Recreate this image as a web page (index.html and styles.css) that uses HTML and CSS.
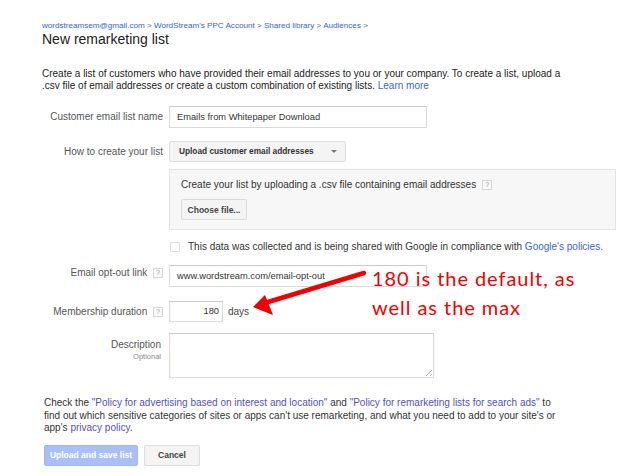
FILE: index.html
```html
<!DOCTYPE html>
<html lang="en">
<head>
<meta charset="utf-8">
<title>New remarketing list</title>
<link rel="stylesheet" href="styles.css">
</head>
<body>
<div class="page">
  <div class="crumbs"><a>wordstreamsem@gmail.com</a> &gt; <a>WordStream's PPC Account</a> &gt; <a>Shared library</a> &gt; <a>Audiences</a> &gt;</div>
  <h1 class="title">New remarketing list</h1>
  <p class="intro">Create a list of customers who have provided their email addresses to you or your company. To create a list, upload a<br>.csv file of email addresses or create a custom combination of existing lists. <a>Learn more</a></p>

  <div class="form">
    <div class="row r-name">
      <div class="label">Customer email list name</div>
      <div class="field"><div class="input w-name">Emails from Whitepaper Download</div></div>
    </div>
    <div class="row r-how">
      <div class="label">How to create your list</div>
      <div class="field"><div class="select">Upload customer email addresses<span class="caret"></span></div></div>
    </div>
    <div class="row r-panel">
      <div class="label"></div>
      <div class="field">
        <div class="panel">
          <div class="panel-text">Create your list by uploading a .csv file containing email addresses <span class="help">?</span></div>
          <div class="btn">Choose file...</div>
        </div>
      </div>
    </div>
    <div class="row r-check">
      <div class="label"></div>
      <div class="field check"><span class="box"></span><span class="check-text">This data was collected and is being shared with Google in compliance with <a>Google's policies.</a></span></div>
    </div>
    <div class="row r-opt">
      <div class="label lift">Email opt-out link <span class="help">?</span></div>
      <div class="field"><div class="input w-name">www.wordstream.com/email-opt-out</div></div>
    </div>
    <div class="row r-dur">
      <div class="label">Membership duration <span class="help">?</span></div>
      <div class="field"><div class="input w-num">180</div><span class="unit">days</span></div>
    </div>
    <div class="row r-desc">
      <div class="label top">Description<span class="sub">Optional</span></div>
      <div class="field"><div class="textarea"><span class="grip"></span></div></div>
    </div>
  </div>

  <p class="policy">Check the <a class="v">"Policy for advertising based on interest and location"</a> and <a class="v">"Policy for remarketing lists for search ads"</a> to<br>find out which sensitive categories of sites or apps can't use remarketing, and what you need to add to your site's or<br>app's <a class="v">privacy policy</a>.</p>

  <div class="actions">
    <div class="btn primary">Upload and save list</div>
    <div class="btn cancel">Cancel</div>
  </div>
</div>

<div class="note">180 is the default, as<br>well as the max</div>
<svg class="arrow" width="623" height="476" viewBox="0 0 623 476">
  <line x1="364" y1="273" x2="268" y2="302" stroke="#f00000" stroke-width="4.5" stroke-linecap="round"/>
  <polygon points="253,307 265,295 273,315" fill="#f00000"/>
</svg>
</body>
</html>
```

FILE: styles.css
```css
html, body { margin: 0; padding: 0; background: #fff; }
body {
  font-family: "Liberation Sans", Arial, sans-serif;
  color: #333;
  position: relative;
  width: 623px;
  height: 476px;
  overflow: hidden;
}
a { color: #3b63cc; text-decoration: none; }
a.v { color: #5250c0; }

.page { padding: 21px 0 0 42px; }

.crumbs { font-size: 8.1px; line-height: 10px; color: #666; }
.crumbs a { color: #3b63cc; }

.title {
  margin: 0;
  font-size: 14px;
  line-height: 16px;
  font-weight: normal;
  color: #222;
}

.intro {
  margin: 21px 0 0;
  font-size: 10px;
  line-height: 12px;
  color: #222;
}

.form { margin-top: 14px; display: flex; flex-direction: column; }
.row { display: flex; align-items: center; gap: 6px; }
.label {
  width: 121px;
  flex: none;
  text-align: right;
  font-size: 10px;
  line-height: 12px;
  color: #555;
  white-space: nowrap;
}
.label.lift { align-self: flex-start; padding-top: 2px; }
.label.top { align-self: flex-start; padding-top: 6px; width: 119px; padding-right: 2px; }
.sub { display: block; font-size: 7.5px; line-height: 10px; color: #888; margin-top: 1px; }
.field { display: flex; align-items: center; font-size: 10px; }

.r-how { margin-top: 13px; }
.r-panel { margin-top: 7px; }
.r-check { margin-top: 11px; }
.r-opt { margin-top: 12px; }
.r-dur { margin-top: 14px; }
.r-desc { margin-top: 11px; }

.input {
  box-sizing: border-box;
  height: 22px;
  border: 1px solid #d9d9d9;
  border-top-color: #c9c9c9;
  padding: 0 7px;
  font-size: 9.3px;
  line-height: 20px;
  color: #333;
  background: #fff;
}
.w-name { width: 258px; }
.w-num { width: 54px; height: 21px; line-height: 19px; text-align: right; padding: 0 3px; }
.unit { margin-left: 5px; font-size: 10px; color: #444; }

.select {
  box-sizing: border-box;
  width: 177px;
  height: 21px;
  border: 1px solid #dcdcdc;
  border-radius: 2px;
  background: #f4f4f4;
  padding: 0 0 0 9px;
  font-size: 8.3px;
  font-weight: bold;
  line-height: 19px;
  color: #333;
  display: flex;
  align-items: center;
}
.caret {
  margin-left: 17px;
  width: 0; height: 0;
  border-left: 3px solid transparent;
  border-right: 3px solid transparent;
  border-top: 3px solid #777;
}

.panel {
  box-sizing: border-box;
  width: 447px;
  height: 61px;
  border: 1px solid #e3e3e3;
  background: #f7f7f7;
  padding: 9px 11px 0;
}
.panel-text { font-size: 10px; line-height: 12px; color: #333; display: flex; align-items: center; }
.panel-text .help { margin-left: 6px; }

.help {
  display: inline-block;
  box-sizing: border-box;
  width: 10px;
  height: 10px;
  border: 1px solid #d6d6d6;
  background: #f9f9f9;
  font-size: 7px;
  line-height: 8px;
  text-align: center;
  color: #999;
  vertical-align: 1px;
  margin-left: 3px;
}

.btn {
  box-sizing: border-box;
  display: inline-flex;
  align-items: center;
  justify-content: center;
  height: 21px;
  border: 1px solid #dcdcdc;
  border-radius: 2px;
  background: #f4f4f4;
  font-size: 8.5px;
  font-weight: bold;
  color: #444;
}
.panel .btn { width: 66px; margin-top: 8px; }

.check { color: #333; line-height: 12px; }
.check-text { white-space: nowrap; }
.box {
  box-sizing: border-box;
  flex: none;
  width: 10px;
  height: 10px;
  border: 1px solid #dedede;
  border-radius: 1px;
  margin: 0 8px 0 1px;
}

.textarea {
  box-sizing: border-box;
  position: relative;
  width: 265px;
  height: 45px;
  border: 1px solid #d9d9d9;
  border-top-color: #c9c9c9;
  background: #fff;
}
.grip {
  position: absolute;
  right: 1px;
  bottom: 1px;
  width: 6px;
  height: 6px;
  background: linear-gradient(135deg, transparent 45%, #aaa 45%, #aaa 55%, transparent 55%, transparent 75%, #aaa 75%, #aaa 85%, transparent 85%);
}

.policy {
  margin: 19px 0 0 2px;
  font-size: 10px;
  line-height: 12.5px;
  color: #333;
}

.actions { margin: 10px 0 0 2px; display: flex; gap: 6px; }
.primary {
  width: 94px;
  background: #a9c0f7;
  border-color: #a0b7f0;
  color: #fff;
}
.cancel { width: 56px; }

.note {
  position: absolute;
  left: 372px;
  top: 264px;
  font-family: Lato, "Open Sans", sans-serif;
  font-size: 20px;
  letter-spacing: 0.95px;
  line-height: 29px;
  color: #f00000;
  white-space: nowrap;
}
.arrow { position: absolute; left: 0; top: 0; pointer-events: none; }
```
